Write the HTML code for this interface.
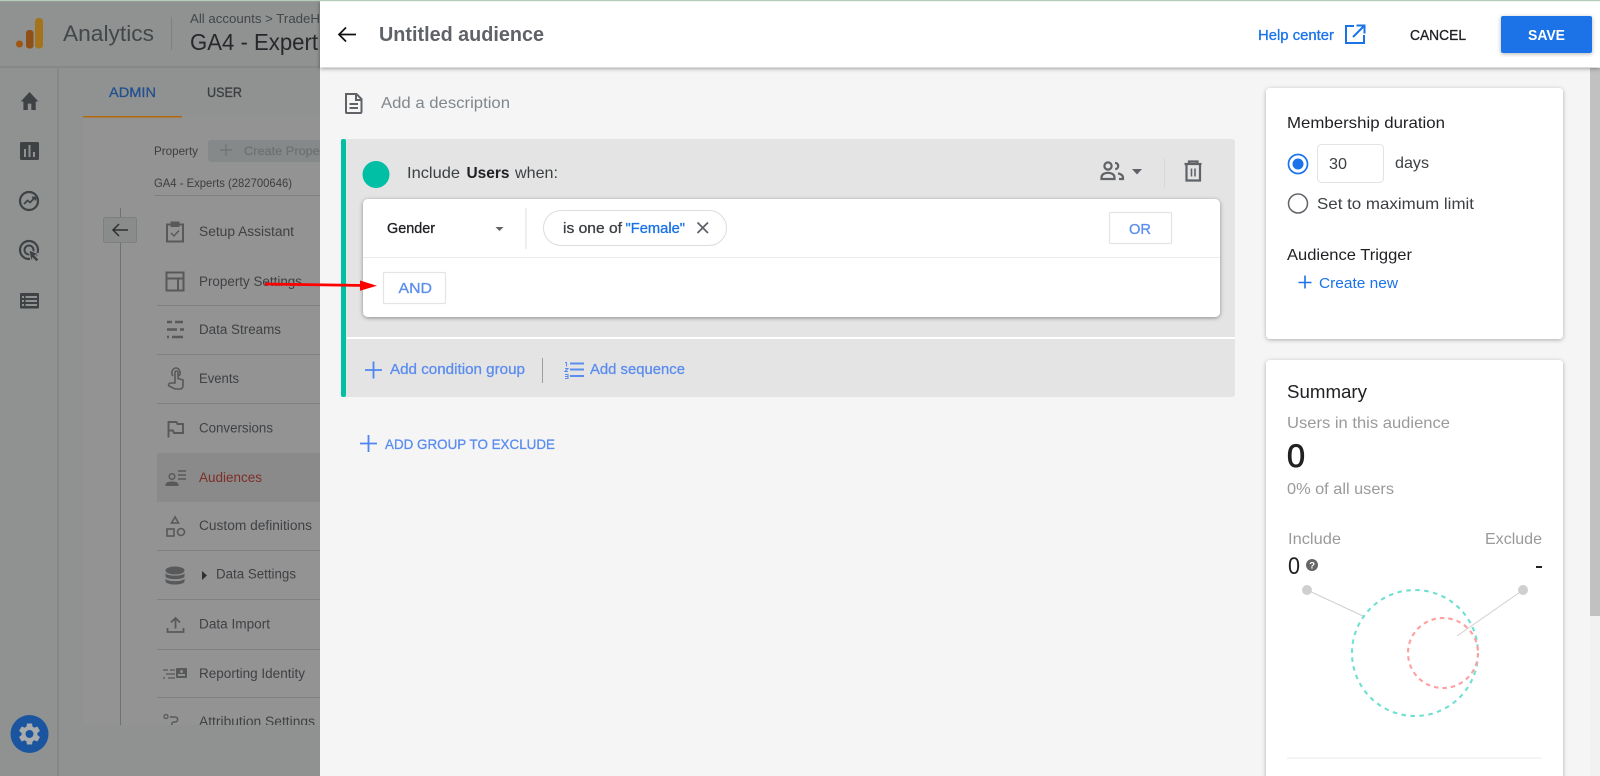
<!DOCTYPE html>
<html lang="en"><head><meta charset="utf-8"><title>Untitled audience</title>
<style>
html,body{margin:0;padding:0;width:1600px;height:776px;overflow:hidden;background:#f5f5f5}
svg{display:block}
text{font-family:"Liberation Sans",Arial,sans-serif;white-space:pre}
.m{stroke:currentColor;stroke-width:.3}
</style></head><body>
<svg xmlns="http://www.w3.org/2000/svg" width="1600" height="776" viewBox="0 0 1600 776">
<defs>
<filter id="s1" x="-5%" y="-10%" width="110%" height="125%"><feDropShadow dx="0" dy="1" stdDeviation="2" flood-color="#000" flood-opacity=".4"/></filter>
<filter id="s2" x="-5%" y="-10%" width="110%" height="120%"><feDropShadow dx="0" dy="1" stdDeviation="2" flood-color="#000" flood-opacity=".3"/></filter>
<clipPath id="cl"><rect x="0" y="0" width="320" height="725"/></clipPath>
</defs>

<!-- dimmed background app -->
<rect width="320" height="776" fill="#8f9291"/>
<rect x="83" y="117" width="237" height="608" fill="#939393"/>
<rect x="0" y="66" width="320" height="2" fill="#858887"/>
<rect x="57" y="68" width="2" height="708" fill="#858887"/>
<rect x="157" y="453" width="163" height="49" fill="#8a8a8a"/>
<g clip-path="url(#cl)" fill="#3f4245">
<!-- logo -->
<circle cx="19.500" cy="44" r="3.500" fill="#a05510"/>
<rect x="26" y="30" width="7.500" height="18.500" rx="3" fill="#8f5018"/>
<rect x="35" y="18" width="8" height="30.500" rx="3.500" fill="#a3741c"/>
<text x="63" y="41" font-size="22" textLength="91" lengthAdjust="spacingAndGlyphs" fill="#44474a">Analytics</text>
<rect x="171" y="17" width="1" height="33" fill="#7e8180"/>
<text x="190" y="23" font-size="12.500" textLength="130" lengthAdjust="spacingAndGlyphs" fill="#44474a">All accounts &gt; TradeH</text>
<text x="190" y="50" font-size="23" textLength="128" lengthAdjust="spacingAndGlyphs" fill="#26282c">GA4 - Expert</text>
<!-- tabs -->
<text x="109" y="97" font-size="14" textLength="47" lengthAdjust="spacingAndGlyphs" fill="#23508f" class="m" style="color:#23508f">ADMIN</text>
<text x="207" y="97" font-size="14" textLength="35" lengthAdjust="spacingAndGlyphs" fill="#3c3e40" class="m" style="color:#3c3e40">USER</text>
<rect x="83" y="116" width="99" height="1.500" fill="#b4680c"/>
<!-- rail icons -->
<path transform="translate(19 88.800) scale(.88 1.060)" d="M10 20v-6h4v6h5v-8h3L12 3 2 12h3v8z" fill="#3f4245"/>
<rect x="20" y="142" width="19" height="18" rx="1.500" fill="#3f4245"/>
<g fill="#8f9291"><rect x="24" y="149" width="2" height="8"/><rect x="28.500" y="145" width="2" height="12"/><rect x="33" y="152" width="2" height="5"/></g>
<circle cx="29" cy="201" r="9" fill="none" stroke="#3f4245" stroke-width="2.200"/>
<path d="M24 204l3.500-3.500 2.500 2 5-5M32 197.500h3.500v3" fill="none" stroke="#3f4245" stroke-width="1.700"/>
<circle cx="29" cy="250" r="9" fill="none" stroke="#3f4245" stroke-width="2.200"/>
<circle cx="29" cy="250" r="4.500" fill="none" stroke="#3f4245" stroke-width="2"/>
<path d="M29 250l10 4-4 1.500 4 4-2.500 2.500-4-4-1.500 4z" fill="#3f4245" stroke="#8f9291" stroke-width="1"/>
<rect x="20" y="293" width="19" height="15.500" rx="1" fill="#3f4245"/>
<g fill="#8f9291"><rect x="22" y="296" width="2" height="2"/><rect x="22" y="300" width="2" height="2"/><rect x="22" y="304" width="2" height="2"/><rect x="25.500" y="296" width="11.500" height="2"/><rect x="25.500" y="300" width="11.500" height="2"/><rect x="25.500" y="304" width="11.500" height="2"/></g>
<!-- admin column -->
<text x="154" y="155" font-size="12" textLength="44" lengthAdjust="spacingAndGlyphs" fill="#3c3e40">Property</text>
<rect x="208" y="140" width="130" height="22" rx="3" fill="#868989"/>
<path d="M226 144v12M220 150h12" stroke="#6f7272" stroke-width="1.200"/>
<text x="244" y="155" font-size="12" textLength="90" lengthAdjust="spacingAndGlyphs" fill="#6f7272" class="m" style="color:#6f7272">Create Property</text>
<text x="154" y="187" font-size="12" textLength="138" lengthAdjust="spacingAndGlyphs" fill="#3c3e40">GA4 - Experts (282700646)</text>
<rect x="154" y="195" width="166" height="1" fill="#7f8181"/>
<rect x="120" y="208" width="1" height="517" fill="#6f7171"/>
<rect x="103.500" y="217.500" width="33" height="25" rx="2" fill="#8a8c8c" stroke="#7d7f7f"/>
<path d="M128 230h-15M119 224l-6 6 6 6" fill="none" stroke="#2d2f31" stroke-width="1.500"/>
<g fill="#7f8181"><rect x="157" y="305" width="163" height="1"/><rect x="157" y="354" width="163" height="1"/><rect x="157" y="403" width="163" height="1"/><rect x="157" y="550" width="163" height="1"/><rect x="157" y="599" width="163" height="1"/><rect x="157" y="649" width="163" height="1"/><rect x="157" y="697" width="163" height="1"/></g>
<g font-size="13.500" fill="#3f4144">
<text x="199" y="236" textLength="95" lengthAdjust="spacingAndGlyphs">Setup Assistant</text>
<text x="199" y="286" textLength="103" lengthAdjust="spacingAndGlyphs">Property Settings</text>
<text x="199" y="334" textLength="82" lengthAdjust="spacingAndGlyphs">Data Streams</text>
<text x="199" y="383" textLength="40" lengthAdjust="spacingAndGlyphs">Events</text>
<text x="199" y="432.500" textLength="74" lengthAdjust="spacingAndGlyphs">Conversions</text>
<text x="199" y="482" textLength="63" lengthAdjust="spacingAndGlyphs" fill="#7d2f26">Audiences</text>
<text x="199" y="530" textLength="113" lengthAdjust="spacingAndGlyphs">Custom definitions</text>
<text x="216" y="578.500" textLength="80" lengthAdjust="spacingAndGlyphs">Data Settings</text>
<text x="199" y="628.500" textLength="71" lengthAdjust="spacingAndGlyphs">Data Import</text>
<text x="199" y="678" textLength="106" lengthAdjust="spacingAndGlyphs">Reporting Identity</text>
<text x="199" y="726" textLength="116" lengthAdjust="spacingAndGlyphs">Attribution Settings</text>
</g>
<!-- list icons -->
<g fill="none" stroke="#58595b" stroke-width="2">
<path d="M167 224.500h16v17h-16zM171.500 222.500h7v3.500h-7z"/><path d="M171 233l3 3 5-5.500" stroke-width="1.400"/>
<path d="M166.500 272.500h17v18h-17zM166.500 278.500h17M178 278.500v12"/>
<path d="M167 322h5M175 322h8M167 329.500h10M180 329.500h4M167 337h2M172 337h11" stroke-width="2.400"/>
<path d="M173 376c-2.500-3-.5-8 3-8s5.500 5 3 8M175 383v-10.500c0-2 3-2 3 0v6l5 1.500v5.500c0 2-1 3.500-3 3.500h-5l-6-3c-1-1 0-3 1.500-3z" stroke-width="1.600"/>
<path d="M168.500 437.500v-15.500h8l1 2h5.500v9h-9l-1-2.500h-4.500" stroke-width="1.900"/>
<circle cx="172" cy="476.500" r="2.800" stroke-width="1.500"/><path d="M178 471h8M178 475h8M178 479h8" stroke-width="1.600"/>
<path d="M165.500 486v-1.500c0-4 13-4 13 0v1.500z" fill="#58595b" stroke="none"/>
<path d="M175 517l-3.500 6h7z" stroke-width="1.600"/><rect x="167" y="529" width="7" height="7" stroke-width="1.600"/><circle cx="181" cy="532" r="3.500" stroke-width="1.600"/>
<path d="M167.500 628v4h16v-4M175.500 628.500v-10M171 622.500l4.500-4.500 4.500 4.500" stroke-width="1.800"/>
<path d="M163 670h5M170 670h5M166 674h9M163 678h2M168 678h7" stroke-width="1.300"/>
<path d="M170 717h5c3.500 0 3.500 5 0 5h-1c-3 0-3 4 0 4h4" stroke-width="1.500"/><circle cx="166" cy="716.500" r="2" stroke-width="1.300"/>
</g>
<rect x="176" y="668" width="11" height="10" rx="1" fill="#58595b"/><circle cx="181.500" cy="671.500" r="1.500" fill="#8f9291"/><rect x="178" y="674" width="7" height="2" fill="#8f9291"/>
<g fill="#58595b">
<ellipse cx="175" cy="570.500" rx="9.500" ry="4"/>
<path d="M165.500 573c1 3.500 18 3.500 19 0v3.500c-1 3.500-18 3.500-19 0zM165.500 578.500c1 3.500 18 3.500 19 0v3c-1 4-18 4-19 0z"/>
</g>
<path d="M202 571l5 4.500-5 4.500z" fill="#2d2f31"/>
</g>
<circle cx="29.500" cy="734" r="19" fill="#1b55a0"/>
<path transform="translate(16.300 720.800) scale(1.100)" fill="#a9acad" d="M19.140 12.940c.04-.3.06-.61.06-.94 0-.32-.02-.64-.07-.94l2.030-1.580c.18-.14.23-.41.12-.61l-1.920-3.320c-.12-.22-.37-.29-.59-.22l-2.390.96c-.5-.38-1.030-.7-1.620-.94l-.36-2.540c-.04-.24-.24-.41-.48-.41h-3.840c-.24 0-.43.17-.47.41l-.36 2.540c-.59.24-1.130.57-1.620.94l-2.390-.96c-.22-.08-.47 0-.59.22L2.740 8.870c-.12.21-.08.47.12.61l2.030 1.580c-.05.3-.09.63-.09.94s.02.64.07.94l-2.030 1.580c-.18.14-.23.41-.12.61l1.920 3.320c.12.22.37.29.59.22l2.390-.96c.5.38 1.030.7 1.620.94l.36 2.540c.05.24.24.41.48.41h3.840c.24 0 .44-.17.47-.41l.36-2.540c.59-.24 1.130-.56 1.620-.94l2.390.96c.22.08.47 0 .59-.22l1.920-3.320c.12-.22.07-.47-.12-.61l-2.010-1.580zM12 15.600c-1.980 0-3.600-1.620-3.600-3.600s1.620-3.600 3.600-3.600 3.600 1.620 3.600 3.600-1.620 3.600-3.600 3.600z"/>

<!-- panel -->
<rect x="320" y="0" width="1280" height="776" fill="#f5f5f5"/>
<rect x="1590" y="68" width="10" height="708" fill="#f1f1f1"/>
<rect x="1590" y="68" width="10" height="548" fill="#c1c1c1"/>
<rect x="320" y="1" width="1280" height="66.500" fill="#fff" filter="url(#s1)"/>
<rect x="0" y="0" width="1600" height="1.200" fill="#b4ccb8"/>
<path d="M356 34.500h-16M346 27.500l-7 7 7 7" fill="none" stroke="#111" stroke-width="1.700"/>
<text x="379" y="41" font-size="20" textLength="165" lengthAdjust="spacingAndGlyphs" font-weight="700" fill="#5f6368">Untitled audience</text>
<text x="1258" y="40" font-size="14.500" textLength="76" lengthAdjust="spacingAndGlyphs" fill="#1a73e8" class="m" style="color:#1a73e8">Help center</text>
<path d="M1354 26h-8v17h18v-8M1353 37l11-11M1356.500 25.500h8v8" fill="none" stroke="#1a73e8" stroke-width="2"/>
<text x="1410" y="40" font-size="14.500" textLength="56" lengthAdjust="spacingAndGlyphs" fill="#202124" class="m" style="color:#202124">CANCEL</text>
<rect x="1501" y="16" width="91" height="37" rx="2" fill="#1a73e8" filter="url(#s2)"/>
<text x="1528" y="40" font-size="14.500" textLength="37" lengthAdjust="spacingAndGlyphs" font-weight="700" fill="#fff">SAVE</text>

<!-- description -->
<path d="M346 94h10.500l5 5v13c0 .5-.5 1-1 1h-14c-.5 0-.5-.5-.5-1zM356 94v6h5.500M349.500 104h8.500M349.500 108h8.500" fill="none" stroke="#5f6368" stroke-width="2"/>
<text x="381" y="108" font-size="16" textLength="129" lengthAdjust="spacingAndGlyphs" fill="#80868b">Add a description</text>

<!-- group -->
<rect x="341" y="139" width="894" height="258" rx="3" fill="#e4e4e4"/>
<rect x="341" y="139" width="5" height="258" rx="2" fill="#00bfa5"/>
<circle cx="376" cy="174.500" r="13.500" fill="#00bfa5"/>
<g font-size="16" fill="#3c4043">
<text x="407" y="178" textLength="53" lengthAdjust="spacingAndGlyphs">Include</text>
<text x="466.500" y="178" textLength="43" lengthAdjust="spacingAndGlyphs" font-weight="700" fill="#202124">Users</text>
<text x="515" y="178" textLength="43" lengthAdjust="spacingAndGlyphs">when:</text>
</g>
<g fill="none" stroke="#5f6368" stroke-width="2.200">
<circle cx="1108" cy="166" r="3.600"/>
<path d="M1101.500 179v-1.500c0-3.200 3.200-4.700 6.500-4.700s6.500 1.500 6.500 4.700v1.500zM1115 162.800c2 .3 3.200 1.500 3.200 3.200s-1.200 3-3 3.200M1118 173.300c2.700.7 5 2 5 4.400v1.300h-4"/>
<path d="M1184.500 164h17M1189 164v-2.500h8.500v2.500M1186.500 164v16.500h13.500V164"/>
<path d="M1191.500 168.500v8M1195 168.500v8" stroke-width="1.600"/>
</g>
<path d="M1132 169h10l-5 5.500z" fill="#5f6368"/>
<rect x="1164" y="158" width="1" height="30" fill="#d8d8d8"/>
<rect x="363" y="199" width="857" height="118" rx="5" fill="#fff" filter="url(#s1)"/>
<rect x="363" y="257" width="857" height="1" fill="#ececec"/>
<text x="387" y="233" font-size="14.500" textLength="48" lengthAdjust="spacingAndGlyphs" fill="#202124" class="m" style="color:#202124">Gender</text>
<path d="M495.500 227h8l-4 4z" fill="#5f6368"/>
<rect x="525.500" y="208" width="1" height="41" fill="#dadce0"/>
<rect x="543.500" y="210.500" width="183" height="35" rx="17.500" fill="#fff" stroke="#dadce0"/>
<text x="563" y="233" font-size="14.500" textLength="59" lengthAdjust="spacingAndGlyphs" fill="#3c4043" class="m" style="color:#3c4043">is one of</text>
<text x="625.500" y="233" font-size="14.500" textLength="59.500" lengthAdjust="spacingAndGlyphs" fill="#1a73e8" class="m" style="color:#1a73e8">"Female"</text>
<path d="M697.500 222.500l10.500 10.500M708 222.500l-10.500 10.500" stroke="#5f6368" stroke-width="1.800"/>
<rect x="1109.500" y="212.500" width="62" height="31" rx="1" fill="#fff" stroke="#e4e4e4" stroke-width="1.200"/>
<text x="1129" y="234" font-size="15" textLength="22" lengthAdjust="spacingAndGlyphs" fill="#5b8def" class="m" style="color:#5b8def">OR</text>
<rect x="383.500" y="272.500" width="62" height="31" rx="1" fill="#fff" stroke="#e4e4e4" stroke-width="1.200"/>
<text x="398.500" y="293" font-size="15" textLength="33.500" lengthAdjust="spacingAndGlyphs" fill="#5b8def" class="m" style="color:#5b8def">AND</text>
<rect x="347" y="337" width="888" height="2" fill="#fff"/>
<path d="M373.500 361.500v17M365 370h17" stroke="#4d86f0" stroke-width="1.800"/>
<text x="390" y="374" font-size="15" textLength="135" lengthAdjust="spacingAndGlyphs" fill="#5b8def" class="m" style="color:#5b8def">Add condition group</text>
<rect x="542" y="358" width="1" height="25" fill="#9e9e9e"/>
<path d="M570 363.500h14M570 369.500h14M570 376h14" stroke="#5b8def" stroke-width="1.900"/>
<path d="M565 362.500h1.500v4M565 368.500h3l-3 3h3M565 374.500h3v4h-3M565 376.500h3" fill="none" stroke="#5b8def" stroke-width="1.100"/>
<text x="590" y="374" font-size="15" textLength="95" lengthAdjust="spacingAndGlyphs" fill="#5b8def" class="m" style="color:#5b8def">Add sequence</text>
<path d="M368.500 435v17M360 443.500h17" stroke="#4d86f0" stroke-width="1.800"/>
<text x="385" y="449" font-size="14" textLength="170" lengthAdjust="spacingAndGlyphs" fill="#5b8def" class="m" style="color:#5b8def">ADD GROUP TO EXCLUDE</text>

<!-- red arrow -->
<path d="M265 284L365 285.500" stroke="#f00" stroke-width="2.800"/>
<path d="M360 280.500l17 5.200-17 5z" fill="#f00"/>

<!-- membership card -->
<rect x="1266" y="88" width="297" height="251" rx="4" fill="#fff" filter="url(#s2)"/>
<g font-size="16" fill="#3c4043">
<text x="1287" y="128" textLength="158" lengthAdjust="spacingAndGlyphs" fill="#202124">Membership duration</text>
<text x="1395" y="168" textLength="34" lengthAdjust="spacingAndGlyphs">days</text>
<text x="1317" y="209" textLength="157" lengthAdjust="spacingAndGlyphs">Set to maximum limit</text>
<text x="1287" y="260" textLength="125" lengthAdjust="spacingAndGlyphs" fill="#202124">Audience Trigger</text>
</g>
<circle cx="1298" cy="164" r="9.500" fill="#fff" stroke="#1a73e8" stroke-width="1.700"/>
<circle cx="1298" cy="164" r="5.500" fill="#1a73e8"/>
<rect x="1317.500" y="144.500" width="66" height="38" rx="4" fill="#fff" stroke="#e3e3e3"/>
<text x="1329" y="169" font-size="16" textLength="18" lengthAdjust="spacingAndGlyphs" fill="#3c4043">30</text>
<circle cx="1298" cy="203.500" r="9.500" fill="#fff" stroke="#5f6368" stroke-width="1.500"/>
<path d="M1305 275.500v13M1298.500 282.500h13" stroke="#1a73e8" stroke-width="1.600"/>
<text x="1319" y="288" font-size="14.500" textLength="79" lengthAdjust="spacingAndGlyphs" fill="#1a73e8">Create new</text>

<!-- summary card -->
<rect x="1266" y="360" width="297" height="440" rx="4" fill="#fff" filter="url(#s2)"/>
<text x="1287" y="398" font-size="18" textLength="80" lengthAdjust="spacingAndGlyphs" fill="#202124">Summary</text>
<text x="1287" y="428" font-size="16" textLength="163" lengthAdjust="spacingAndGlyphs" fill="#9a9a9a">Users in this audience</text>
<text x="1287" y="467" font-size="32" textLength="18" lengthAdjust="spacingAndGlyphs" fill="#202124" style="stroke:#202124;stroke-width:.8">0</text>
<text x="1287" y="494" font-size="16" textLength="107" lengthAdjust="spacingAndGlyphs" fill="#9a9a9a">0% of all users</text>
<text x="1288" y="544" font-size="16" textLength="53" lengthAdjust="spacingAndGlyphs" fill="#9a9a9a">Include</text>
<text x="1485" y="544" font-size="16" textLength="57" lengthAdjust="spacingAndGlyphs" fill="#9a9a9a">Exclude</text>
<text x="1288" y="574" font-size="24" textLength="12" lengthAdjust="spacingAndGlyphs" fill="#202124">0</text>
<circle cx="1312" cy="565" r="6" fill="#666"/>
<text x="1309.200" y="568.500" font-size="9.500" font-weight="700" fill="#fff">?</text>
<rect x="1536" y="566" width="6" height="2" fill="#202124"/>
<line x1="1307" y1="590" x2="1364" y2="616.500" stroke="#d0d0d0" stroke-width="1"/>
<line x1="1523" y1="590" x2="1457" y2="636" stroke="#d0d0d0" stroke-width="1"/>
<circle cx="1307" cy="590" r="5" fill="#cfcfcf"/>
<circle cx="1523" cy="590" r="5" fill="#cfcfcf"/>
<circle cx="1415" cy="653" r="63" fill="none" stroke="#6fe0d0" stroke-width="2.100" stroke-dasharray="4.500 4.500"/>
<circle cx="1443" cy="653" r="35" fill="none" stroke="#ff9f9f" stroke-width="2.100" stroke-dasharray="4.500 4"/>
<rect x="1287" y="757.500" width="255" height="1.200" fill="#ececec"/>
</svg>
</body></html>
